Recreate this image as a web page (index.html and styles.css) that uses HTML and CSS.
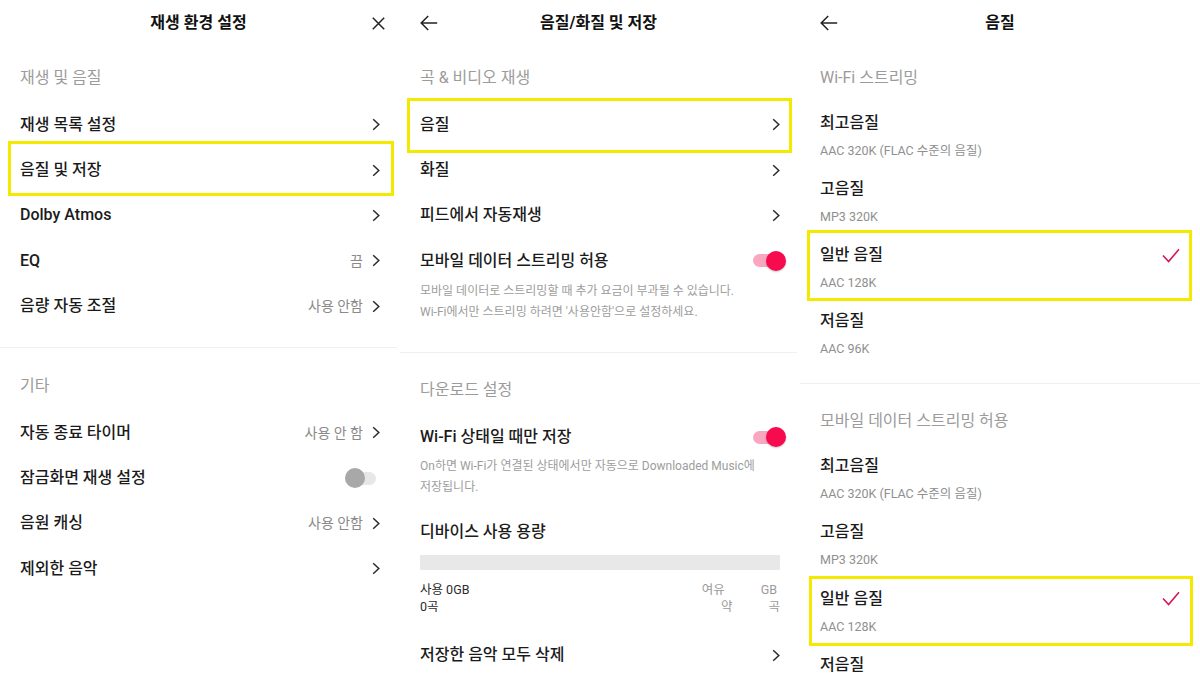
FILE: index.html
```html
<!DOCTYPE html>
<html lang="ko">
<head>
<meta charset="utf-8">
<title>설정</title>
<link rel="stylesheet" href="styles.css">
</head>
<body>
<div class="screens">
  <!-- Panel 1 -->
  <section class="panel p1">
    <header class="topbar">
      <span></span>
      <span class="title">재생 환경 설정</span>
      <svg class="close" viewBox="0 0 13 13"><path d="M0.8 0.8L12.2 12.2M12.2 0.8L0.8 12.2"/></svg>
    </header>
    <div class="group-title">재생 및 음질</div>
    <div class="row"><span class="label">재생 목록 설정</span><span class="trail"><svg class="chev" viewBox="0 0 8 13"><path d="M1.2 1.2L6.8 6.5L1.2 11.8"/></svg></span></div>
    <div class="row hl"><span class="label">음질 및 저장</span><span class="trail"><svg class="chev" viewBox="0 0 8 13"><path d="M1.2 1.2L6.8 6.5L1.2 11.8"/></svg></span></div>
    <div class="row"><span class="label">Dolby Atmos</span><span class="trail"><svg class="chev" viewBox="0 0 8 13"><path d="M1.2 1.2L6.8 6.5L1.2 11.8"/></svg></span></div>
    <div class="row"><span class="label">EQ</span><span class="trail">끔<svg class="chev" viewBox="0 0 8 13"><path d="M1.2 1.2L6.8 6.5L1.2 11.8"/></svg></span></div>
    <div class="row"><span class="label">음량 자동 조절</span><span class="trail">사용 안함<svg class="chev" viewBox="0 0 8 13"><path d="M1.2 1.2L6.8 6.5L1.2 11.8"/></svg></span></div>
    <div class="divider d1"></div>
    <div class="group-title next">기타</div>
    <div class="row"><span class="label">자동 종료 타이머</span><span class="trail">사용 안 함<svg class="chev" viewBox="0 0 8 13"><path d="M1.2 1.2L6.8 6.5L1.2 11.8"/></svg></span></div>
    <div class="row"><span class="label">잠금화면 재생 설정</span><span class="toggle off"><span class="knob"></span></span></div>
    <div class="row"><span class="label">음원 캐싱</span><span class="trail">사용 안함<svg class="chev" viewBox="0 0 8 13"><path d="M1.2 1.2L6.8 6.5L1.2 11.8"/></svg></span></div>
    <div class="row"><span class="label">제외한 음악</span><span class="trail"><svg class="chev" viewBox="0 0 8 13"><path d="M1.2 1.2L6.8 6.5L1.2 11.8"/></svg></span></div>
  </section>

  <!-- Panel 2 -->
  <section class="panel p2">
    <header class="topbar">
      <svg class="back" viewBox="0 0 18 16"><path d="M17.2 8H1.2M8.2 1L1.2 8L8.2 15"/></svg>
      <span class="title">음질/화질 및 저장</span>
      <span></span>
    </header>
    <div class="group-title">곡 &amp; 비디오 재생</div>
    <div class="row hl"><span class="label">음질</span><span class="trail"><svg class="chev" viewBox="0 0 8 13"><path d="M1.2 1.2L6.8 6.5L1.2 11.8"/></svg></span></div>
    <div class="row"><span class="label">화질</span><span class="trail"><svg class="chev" viewBox="0 0 8 13"><path d="M1.2 1.2L6.8 6.5L1.2 11.8"/></svg></span></div>
    <div class="row"><span class="label">피드에서 자동재생</span><span class="trail"><svg class="chev" viewBox="0 0 8 13"><path d="M1.2 1.2L6.8 6.5L1.2 11.8"/></svg></span></div>
    <div class="toggle-item first">
      <div class="toggle-head"><span class="label">모바일 데이터 스트리밍 허용</span><span class="toggle on"><span class="knob"></span></span></div>
      <p class="desc">모바일 데이터로 스트리밍할 때 추가 요금이 부과될 수 있습니다.<br>Wi-Fi에서만 스트리밍 하려면 '사용안함'으로 설정하세요.</p>
    </div>
    <div class="divider d2"></div>
    <div class="group-title next2">다운로드 설정</div>
    <div class="toggle-item second">
      <div class="toggle-head"><span class="label">Wi-Fi 상태일 때만 저장</span><span class="toggle on"><span class="knob"></span></span></div>
      <p class="desc">On하면 Wi-Fi가 연결된 상태에서만 자동으로 Downloaded Music에<br>저장됩니다.</p>
    </div>
    <div class="plain-label"><span class="label">디바이스 사용 용량</span></div>
    <div class="usage-bar"></div>
    <div class="usage">
      <div class="usage-left"><div>사용 0GB</div><div>0곡</div></div>
      <div class="usage-right">
        <div class="ur-line l1"><span>여유</span><span>GB</span></div>
        <div class="ur-line l2"><span>약</span><span>곡</span></div>
      </div>
    </div>
    <div class="row last"><span class="label">저장한 음악 모두 삭제</span><span class="trail"><svg class="chev" viewBox="0 0 8 13"><path d="M1.2 1.2L6.8 6.5L1.2 11.8"/></svg></span></div>
  </section>

  <!-- Panel 3 -->
  <section class="panel p3">
    <header class="topbar">
      <svg class="back" viewBox="0 0 18 16"><path d="M17.2 8H1.2M8.2 1L1.2 8L8.2 15"/></svg>
      <span class="title">음질</span>
      <span></span>
    </header>
    <div class="group-title">Wi-Fi 스트리밍</div>
    <div class="q-item"><div><div class="label">최고음질</div><div class="q-sub">AAC 320K (FLAC 수준의 음질)</div></div></div>
    <div class="q-item"><div><div class="label">고음질</div><div class="q-sub">MP3 320K</div></div></div>
    <div class="q-item hl"><div><div class="label">일반 음질</div><div class="q-sub">AAC 128K</div></div><svg class="check" viewBox="0 0 18 15"><path d="M1 7.5L6.6 13.6L17 1.2"/></svg></div>
    <div class="q-item"><div><div class="label">저음질</div><div class="q-sub">AAC 96K</div></div></div>
    <div class="divider d3"></div>
    <div class="group-title next3">모바일 데이터 스트리밍 허용</div>
    <div class="q-item"><div><div class="label">최고음질</div><div class="q-sub">AAC 320K (FLAC 수준의 음질)</div></div></div>
    <div class="q-item"><div><div class="label">고음질</div><div class="q-sub">MP3 320K</div></div></div>
    <div class="q-item hl hl2"><div><div class="label">일반 음질</div><div class="q-sub">AAC 128K</div></div><svg class="check" viewBox="0 0 18 15"><path d="M1 7.5L6.6 13.6L17 1.2"/></svg></div>
    <div class="q-item"><div><div class="label">저음질</div></div></div>
  </section>
</div>
</body>
</html>
```

FILE: styles.css
```css
* { box-sizing: border-box; margin: 0; padding: 0; }

html, body {
  width: 1200px;
  height: 675px;
  overflow: hidden;
  background: #ffffff;
}

body {
  font-family: Roboto, "Noto Sans CJK KR", sans-serif;
  color: #1b1b1b;
  font-feature-settings: "palt";
}

.screens {
  display: grid;
  grid-template-columns: 397px 397px 400px;
  column-gap: 3px;
  height: 675px;
}

.panel {
  display: flex;
  flex-direction: column;
  overflow: hidden;
  background: #fff;
}

/* top bar */
.topbar {
  height: 46px;
  flex: none;
  display: grid;
  grid-template-columns: 1fr auto 1fr;
  align-items: center;
}
.title {
  font-size: 16px;
  font-weight: 700;
  line-height: 22px;
  color: #111;
}
.back {
  justify-self: start;
  margin-left: 20px;
  width: 18px;
  height: 16px;
  fill: none;
  stroke: #222;
  stroke-width: 1.5;
}
.close {
  justify-self: end;
  margin-right: 12px;
  width: 13px;
  height: 13px;
  fill: none;
  stroke: #222;
  stroke-width: 1.5;
}

/* groups */
.group-title {
  flex: none;
  padding: 21px 20px 13px;
  font-size: 16px;
  line-height: 22px;
  color: #9b9b9b;
}
.group-title.next { padding-top: 27px; }
.group-title.next2 { padding-top: 26px; }
.group-title.next3 { padding-top: 26.5px; }

.divider {
  flex: none;
  height: 1px;
  background: #f0f0f0;
}
.divider.d1 { margin-top: 18px; }
.divider.d2 { margin-top: 28.8px; }
.divider.d3 { margin-top: 15.8px; }

/* rows */
.row {
  flex: none;
  height: 45.4px;
  display: flex;
  align-items: center;
  justify-content: space-between;
  padding: 0 17px 0 20px;
  position: relative;
}
.row.last { margin-top: 17.8px; }

.label {
  font-size: 16px;
  font-weight: 500;
  line-height: 22px;
  color: #1b1b1b;
  white-space: nowrap;
}

.trail {
  display: flex;
  align-items: center;
  gap: 9px;
  font-size: 14px;
  line-height: 20px;
  color: #8a8a8a;
}
.chev {
  width: 8px;
  height: 13px;
  fill: none;
  stroke: #2a2a2a;
  stroke-width: 1.5;
}

/* toggles */
.toggle {
  flex: none;
  width: 31px;
  height: 13px;
  border-radius: 7px;
  display: flex;
  align-items: center;
}
.toggle .knob {
  flex: none;
  width: 20px;
  height: 20px;
  border-radius: 50%;
}
.toggle.off {
  background: #e7e7e7;
  justify-content: flex-start;
  margin-right: 4px;
}
.toggle.off .knob {
  background: #a8a8a8;
}
.toggle.on {
  background: #f9a7c0;
  justify-content: flex-end;
  margin-right: -4px;
}
.toggle.on .knob {
  background: #f60b4e;
  margin-right: -2px;
  box-shadow: 0 1px 2px rgba(0, 0, 0, 0.22);
}

.toggle-item {
  flex: none;
  padding: 11.5px 17px 0 20px;
}
.toggle-item.second { padding-top: 12.5px; }
.toggle-head {
  height: 22px;
  display: flex;
  align-items: center;
  justify-content: space-between;
}
.desc {
  margin-top: 9.5px;
  font-size: 12px;
  line-height: 21px;
  color: #9d9d9d;
  white-space: nowrap;
}
.toggle-item.second .desc { margin-top: 8px; }

/* storage */
.plain-label {
  flex: none;
  margin-top: 23px;
  padding: 0 17px 0 20px;
  height: 22px;
  display: flex;
  align-items: center;
}
.usage-bar {
  flex: none;
  margin: 11.5px 17px 0 20px;
  height: 15px;
  background: #e8e8e8;
}
.usage {
  flex: none;
  margin: 11px 17px 0 20px;
  display: flex;
  justify-content: space-between;
  font-size: 12.5px;
  line-height: 17px;
}
.usage-left { color: #2b2b2b; }
.usage-right {
  display: flex;
  flex-direction: column;
  align-items: flex-end;
  color: #9a9a9a;
}
.ur-line {
  display: flex;
  gap: 36px;
}
.ur-line.l1 { padding-right: 3px; }

/* quality list */
.q-item {
  flex: none;
  position: relative;
  display: flex;
  justify-content: space-between;
  align-items: flex-start;
  padding: 9.5px 20px 8.8px;
}
.q-item .label { display: block; }
.q-sub {
  margin-top: 8px;
  font-size: 12.5px;
  line-height: 18px;
  color: #8f8f8f;
}
.check {
  margin-top: 3.5px;
  width: 18px;
  height: 15px;
  fill: none;
  stroke: #d6155b;
  stroke-width: 1.6;
}

/* yellow annotation boxes */
.hl::after {
  content: "";
  position: absolute;
  border: 3.5px solid #f5e900;
  pointer-events: none;
}
.p1 .hl::after { top: -6px; bottom: -3px; left: 8px; right: 3px; }
.p2 .hl::after { top: -4px; bottom: -6px; left: 7px; right: 5px; }
.p3 .hl::after { top: -4.5px; bottom: 0px; left: 7px; right: 8px; }
.p3 .hl2::after { top: -2.5px; bottom: -1.5px; left: 9px; right: 7px; }
```
